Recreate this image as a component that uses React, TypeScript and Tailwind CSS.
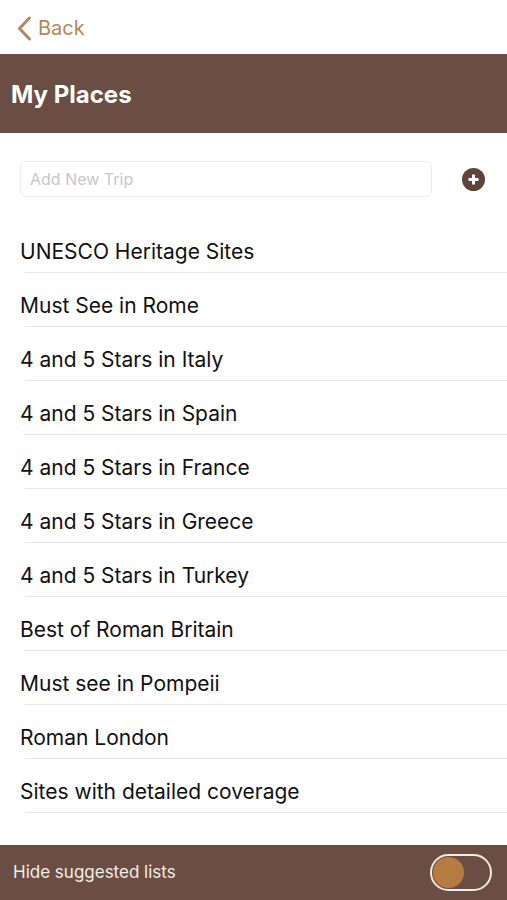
import React from "react";

const items = [
  "UNESCO Heritage Sites",
  "Must See in Rome",
  "4 and 5 Stars in Italy",
  "4 and 5 Stars in Spain",
  "4 and 5 Stars in France",
  "4 and 5 Stars in Greece",
  "4 and 5 Stars in Turkey",
  "Best of Roman Britain",
  "Must see in Pompeii",
  "Roman London",
  "Sites with detailed coverage",
];

export default function App() {
  return (
    <div
      className="flex h-[900px] w-[507px] flex-col bg-white"
      style={{ fontFamily: "Inter, 'Liberation Sans', sans-serif" }}
    >
      <div className="flex h-[54px] items-center pl-[17px] pt-[2px]">
        <svg width="15" height="25" viewBox="0 0 15 25" className="mr-[6px]">
          <path d="M12.5 2 L2.5 12.5 L12.5 23" fill="none" stroke="#b8865a" strokeWidth="3" strokeLinecap="round" strokeLinejoin="round" />
        </svg>
        <span className="text-[20px] text-[#b8865a]">Back</span>
      </div>
      <div className="flex h-[79px] items-center bg-[#6a4e43] pl-[11px] pt-[3px]">
        <span className="text-[24px] font-bold text-white">My Places</span>
      </div>
      <div className="flex items-center pl-[20px] pr-[22px] pt-[28px]">
        <div className="flex h-[36px] w-[412px] items-center rounded-[6px] border border-[#ececec] px-[9px]">
          <span className="text-[16px] text-[#c8c8c8]">Add New Trip</span>
        </div>
        <div className="ml-auto flex h-[23px] w-[23px] items-center justify-center rounded-full bg-[#5e4339]">
          <svg width="13" height="13" viewBox="0 0 13 13">
            <path d="M6.5 1.5 V11.5 M1.5 6.5 H11.5" stroke="white" strokeWidth="3" />
          </svg>
        </div>
      </div>
      <div className="mt-[22px] flex flex-col">
        {items.map((t) => (
          <div key={t} className="flex flex-col pl-[20px]">
            <div className="pt-[18px] pb-[5px] text-[21px] leading-[30px] text-[#111111]">{t}</div>
            <div className="ml-[5px] h-px bg-[#e6e6e6]" />
          </div>
        ))}
      </div>
      <div className="flex-1" />
      <div className="flex h-[55px] items-center justify-between bg-[#6a4e43] pl-[13px] pr-[15px]">
        <span className="text-[17px] text-[#f4ece6]">Hide suggested lists</span>
        <div className="flex h-[37px] w-[62px] items-center rounded-full border-2 border-[#f3e9df] px-[1px]">
          <div className="h-[31px] w-[31px] rounded-full bg-[#b57b40]" />
        </div>
      </div>
    </div>
  );
}
